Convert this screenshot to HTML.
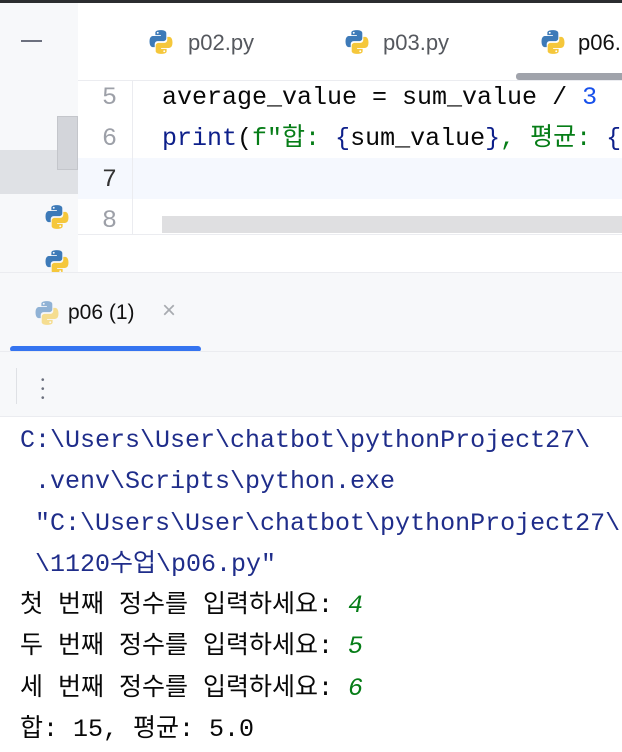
<!DOCTYPE html>
<html><head><meta charset="utf-8"><style>
body{margin:0;width:622px;height:752px;overflow:hidden;background:#fff;position:relative;font-family:"Liberation Sans","Noto Sans CJK KR",sans-serif}
.abs{position:absolute}
.mono{font-family:"Liberation Mono","Noto Sans CJK KR",monospace;font-size:25px;white-space:pre}
.py{position:absolute;width:26px;height:26px}
</style></head><body>
<div class="abs" style="left:0;top:0;width:622px;height:3px;background:#2b2d30"></div>
<div class="abs" style="left:0;top:3px;width:78px;height:269px;background:#f7f8fa"></div>
<div class="abs" style="left:78px;top:3px;width:544px;height:77px;background:#fff"></div>
<div class="abs" style="left:21px;top:40px;width:21px;height:2px;background:#6c707e"></div>
<svg width="0" height="0" style="position:absolute"><defs><symbol id="p" viewBox="0 0 24 24"><path d="M11.8 1C6.5 1 6.8 3.3 6.8 3.3V5.7h5.1v.8H4.8S1.4 6.1 1.4 11.5s3 5.2 3 5.2h1.8v-2.5s-.1-3 2.9-3h5c0 0 2.8 0 2.8-2.8V3.8S17.3 1 11.8 1zm-2.8 1.6a.9.9 0 110 1.8.9.9 0 010-1.8z" fill="#3d7ab8"/><path d="M12.2 23c5.3 0 5-2.3 5-2.3v-2.4h-5.1v-.8h7.1s3.4.4 3.4-5-3-5.2-3-5.2h-1.8v2.5s.1 3-2.9 3h-5s-2.8 0-2.8 2.8v4.6S6.7 23 12.2 23zm2.8-1.6a.9.9 0 110-1.8.9.9 0 010 1.8z" fill="#f5c73b"/></symbol></defs></svg>
<svg class="py" style="left:148px;top:29px"><use href="#p"/></svg>
<div class="abs" style="left:188px;top:30px;font-size:22px;color:#55585e">p02.py</div>
<svg class="py" style="left:344px;top:29px"><use href="#p"/></svg>
<div class="abs" style="left:383px;top:30px;font-size:22px;color:#55585e">p03.py</div>
<svg class="py" style="left:540px;top:29px"><use href="#p"/></svg>
<div class="abs" style="left:578px;top:30px;font-size:22px;color:#111">p06.py</div>
<div class="abs" style="left:516px;top:73px;width:106px;height:7px;background:#a0a3ab;border-radius:3px 0 0 3px"></div>
<div class="abs" style="left:78px;top:80px;width:544px;height:1px;background:#ebecf0"></div>
<div class="abs" style="left:0;top:150px;width:78px;height:44px;background:#dfe1e5"></div>
<div class="abs" style="left:57px;top:116px;width:19px;height:52px;background:#d3d5da;border:1px solid #c4c6cb"></div>
<div class="abs" style="left:78px;top:158px;width:544px;height:41px;background:#f5f8fe"></div>
<div class="abs" style="left:132px;top:81px;width:1px;height:153px;background:#ebecf0"></div>
<div class="abs mono" style="left:102px;top:77px;color:#9da0a8;line-height:41px">5
6
<span style="color:#333">7</span>
8</div>
<div class="abs mono" style="left:162px;top:77px;line-height:41px;color:#080808">average_value = sum_value / <span style="color:#1750eb">3</span>
<span style="color:#0d1f8a">print</span>(<span style="color:#067d17">f"합: </span><span style="color:#0d1f8a">{</span>sum_value<span style="color:#0d1f8a">}</span><span style="color:#067d17">, 평균: </span><span style="color:#0d1f8a">{</span></div>
<svg class="py" style="left:44px;top:204px"><use href="#p"/></svg>
<svg class="py" style="left:44px;top:249px"><use href="#p"/></svg>
<div class="abs" style="left:162px;top:216px;width:460px;height:17px;background:#dfdfe1"></div>
<div class="abs" style="left:78px;top:234px;width:544px;height:1px;background:#ebecf0"></div>
<div class="abs" style="left:0;top:272px;width:622px;height:144px;background:#f7f8fa;border-top:1px solid #ebecf0"></div>
<svg class="py" style="left:34px;top:300px;opacity:.55"><use href="#p"/></svg>
<div class="abs" style="left:68px;top:301px;font-size:21px;color:#111">p06 (1)</div>
<div class="abs" style="left:162px;top:297px;font-size:24px;color:#a8abb0">×</div>
<div class="abs" style="left:10px;top:346px;width:191px;height:6px;background:#3574f0;border-radius:3px"></div>
<div class="abs" style="left:0;top:351px;width:622px;height:1px;background:#ebecf0"></div>
<div class="abs" style="left:16px;top:368px;width:1px;height:36px;background:#dfe1e5"></div>
<div class="abs" style="left:41px;top:376px;width:5px;height:28px;color:#6c707e;font-size:10px;line-height:9px">•<br>•<br>•</div>
<div class="abs" style="left:0;top:416px;width:622px;height:1px;background:#ebecf0"></div>
<div class="abs mono" style="left:20px;top:420px;line-height:41.3px;color:#080808"><span style="color:#1f2d8a">C:\Users\User\chatbot\pythonProject27\
 .venv\Scripts\python.exe
 "C:\Users\User\chatbot\pythonProject27\
 \1120수업\p06.py"</span>
첫 번째 정수를 입력하세요: <i style="color:#067d17">4</i>
두 번째 정수를 입력하세요: <i style="color:#067d17">5</i>
세 번째 정수를 입력하세요: <i style="color:#067d17">6</i>
합: 15, 평균: 5.0</div>
</body></html>
